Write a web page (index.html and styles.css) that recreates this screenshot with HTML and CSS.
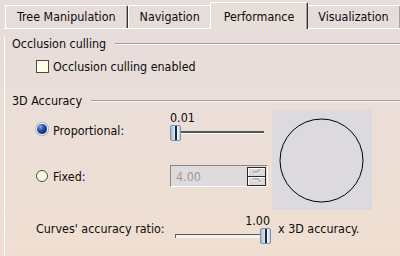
FILE: index.html
```html
<!DOCTYPE html>
<html lang="en">
<head>
  <meta charset="UTF-8">
  <title>Performance</title>
  <link rel="stylesheet" href="styles.css">
</head>
<body>
  <div class="tabs">
    <div class="tab">Tree Manipulation</div>
    <div class="tab">Navigation</div>
    <div class="tab active">Performance</div>
    <div class="tab">Visualization</div>
  </div>
  <div class="panel">
    <div class="group-title"><span>Occlusion culling</span><i class="rule"></i></div>
    <label class="check"><span class="box"></span>Occlusion culling enabled</label>

    <div class="group-title second"><span>3D Accuracy</span><i class="rule"></i></div>
    <div class="accuracy">
      <div class="options">
        <div class="opt opt-prop">
          <label class="radio-label"><span class="radio on"></span>Proportional:</label>
          <div class="slider-wrap">
            <div class="value">0.01</div>
            <div class="slider">
              <span class="thumb"></span>
              <span class="track"></span>
            </div>
          </div>
        </div>
        <div class="opt opt-fixed">
          <label class="radio-label"><span class="radio"></span>Fixed:</label>
          <div class="spinbox">
            <span class="spin-text">4.00</span>
            <span class="spin">
              <span class="spin-btn">
                <svg width="9" height="5" viewBox="0 0 9 5"><polyline points="1,4 6,4 8,1" fill="none" stroke="#fff" stroke-width="1"/><polyline points="1,3 6,3 8,0" fill="none" stroke="#8c8c8c" stroke-width="1"/></svg>
              </span>
              <span class="spin-btn">
                <svg width="9" height="5" viewBox="0 0 9 5"><polyline points="1,2 6,2 8,5" fill="none" stroke="#fff" stroke-width="1"/><polyline points="1,1 6,1 8,4" fill="none" stroke="#8c8c8c" stroke-width="1"/></svg>
              </span>
            </span>
          </div>
        </div>
      </div>
      <div class="preview">
        <svg width="100" height="100" viewBox="0 0 100 100"><circle cx="49.5" cy="50.5" r="41.5" fill="none" stroke="#000" stroke-width="1"/></svg>
      </div>
    </div>

    <div class="curves">
      <span class="curves-label">Curves' accuracy ratio:</span>
      <div class="slider-wrap end">
        <div class="value">1.00</div>
        <div class="slider">
          <span class="track tick"></span>
          <span class="thumb"></span>
        </div>
      </div>
      <span class="suffix">x 3D accuracy.</span>
    </div>
  </div>
</body>
</html>
```

FILE: styles.css
```css
html, body {
  margin: 0;
  height: 256px;
  overflow: hidden;
}
body {
  background: linear-gradient(#e5dcdb 0, #ebded8 45%, #f0dfd1 100%);
  color: #0c0c0c;
  font-family: "DejaVu Sans Condensed", "DejaVu Sans", sans-serif;
  font-stretch: condensed;
  font-size: 12.4px;
}

/* tab strip */
.tabs {
  display: flex;
  align-items: flex-end;
  height: 28px;
  margin-left: 4px;
  padding-left: 1px;
  border-bottom: 1px solid #fff;
}
.tab {
  box-sizing: border-box;
  height: 23px;
  padding: 0 11px;
  line-height: 22px;
  border-top: 1px solid #fff;
  border-left: 1px solid #fff;
  border-right: 1px solid #303030;
  box-shadow: inset -1px 0 #a8a0a0;
  border-radius: 2px 2px 0 0;
  white-space: nowrap;
}
.tab.active {
  position: relative;
  z-index: 1;
  height: 27px;
  margin: 0 -2px -1px;
  padding: 3px 13px 0;
  background: #e7ddd9;
}

/* panel */
.panel {
  margin-left: 4px;
  border-left: 1px solid #fff;
  height: 227px;
}
.group-title {
  display: flex;
  align-items: center;
  gap: 9px;
  padding-left: 7px;
  margin-top: 7px;
  line-height: 15px;
}
.group-title.second {
  margin-top: 19px;
}
.rule {
  flex: 1;
  border-top: 1px solid #a39d9c;
  border-bottom: 1px solid #fbf6f2;
}
.check {
  display: flex;
  align-items: center;
  margin-top: 8px;
  padding-left: 31px;
  line-height: 15px;
}
.box {
  box-sizing: border-box;
  width: 13px;
  height: 13px;
  margin-right: 4px;
  border: 1px solid #4a4a4a;
  background: #fffee2;
}

/* 3D accuracy */
.accuracy {
  display: flex;
  margin-top: 2px;
  padding-left: 31px;
}
.options {
  width: 235px;
}
.opt {
  display: flex;
}
.opt-prop {
  align-items: flex-end;
  margin-top: 1px;
}
.opt-fixed {
  align-items: center;
  margin-top: 24px;
}
.radio-label {
  display: flex;
  align-items: center;
  width: 134px;
  line-height: 15px;
}
.opt-prop .radio-label {
  margin-bottom: 3px;
}
.radio {
  box-sizing: border-box;
  width: 12px;
  height: 12px;
  margin-right: 5px;
  border-radius: 50%;
  border: 1px solid #4a4a4a;
  background: #fffde0;
}
.radio.on {
  margin-top: -3px;
  border: 1px solid #f4f4fa;
  background: radial-gradient(circle at 35% 30%, #8fb0e8 0, #2452b4 35%, #0c2a78 75%, #1a2a50 100%);
  box-shadow: 0 0 0 1px #b8b0b0;
}

/* sliders */
.slider-wrap {
  width: 98px;
}
.slider-wrap.end {
  width: 95px;
}
.value {
  line-height: 14px;
}
.slider-wrap.end .value {
  text-align: right;
}
.slider {
  display: flex;
  align-items: flex-start;
  height: 16px;
}
.thumb {
  box-sizing: border-box;
  flex: none;
  width: 11px;
  height: 16px;
  border: 1px solid #7d93ab;
  border-radius: 2px;
  background:
    linear-gradient(90deg, transparent 4px, #1c2838 4px, #1c2838 6px, transparent 6px),
    linear-gradient(90deg, #a9bccf 0, #d9e4ee 40%, #f4f8fb 70%, #c5d2de 100%);
}
.track {
  flex: none;
  width: 83px;
  height: 2px;
  margin-top: 6px;
  background: #555;
  border-bottom: 1px solid #fff;
}
.track.tick {
  width: 84px;
  height: 3px;
  margin-top: 6px;
  border-left: 1px solid #666;
  border-top: 1px solid #555;
  background: #f6f2ee;
  border-bottom: none;
}

/* spin box */
.spinbox {
  box-sizing: border-box;
  display: flex;
  align-items: center;
  justify-content: space-between;
  width: 98px;
  height: 22px;
  border: 1px solid;
  border-color: #8a8484 #fff #fff #8a8484;
  background: #dddbdc;
}
.spin-text {
  padding-left: 5px;
  color: #a09c9c;
}
.spin {
  display: flex;
  flex-direction: column;
  margin-right: 1px;
}
.spin-btn {
  box-sizing: border-box;
  display: flex;
  align-items: center;
  justify-content: center;
  width: 19px;
  height: 10px;
  border: 1px solid #2a2a2a;
  background: #dcd9d6;
  box-shadow: inset 1px 1px #fff;
}
.spin-btn + .spin-btn {
  margin-top: -1px;
}

.preview {
  width: 100px;
  height: 100px;
  margin-left: 1px;
  background: #dddadf;
}
.preview svg {
  display: block;
}

/* curves row */
.curves {
  display: flex;
  align-items: flex-end;
  margin-top: 4px;
  padding-left: 31px;
}
.curves-label {
  width: 139px;
  line-height: 15px;
  margin-bottom: 8px;
}
.suffix {
  margin-left: 8px;
  line-height: 15px;
  margin-bottom: 8px;
}
```
